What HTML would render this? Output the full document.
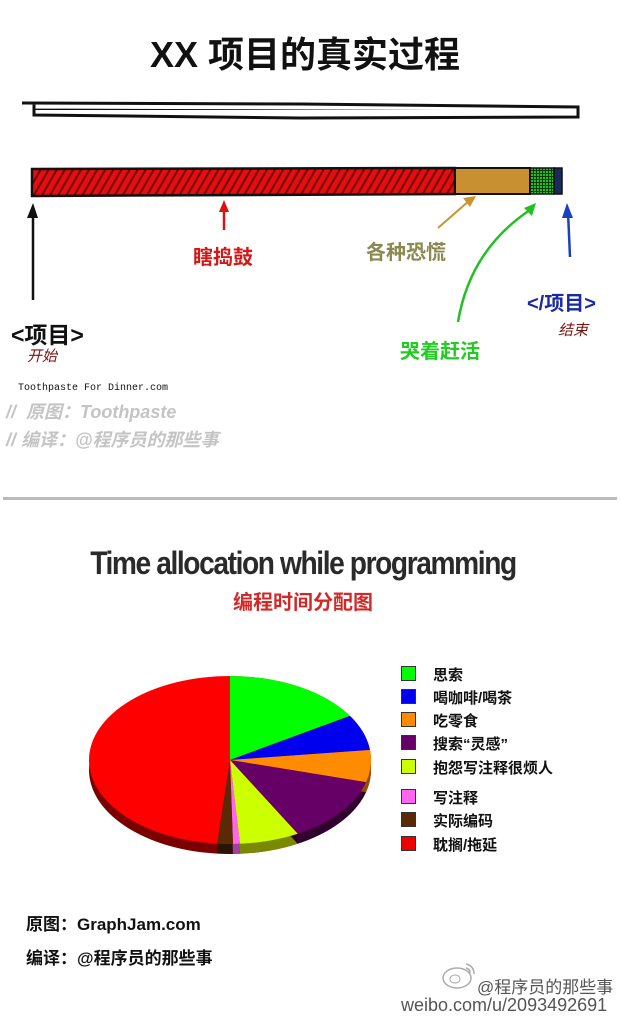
<!DOCTYPE html>
<html><head><meta charset="utf-8"><style>
*{margin:0;padding:0}
body{width:620px;height:1024px;background:#fff;position:relative;overflow:hidden;font-family:"Liberation Sans","Noto Sans CJK SC",sans-serif}
.a{position:absolute;white-space:nowrap}
.b{font-weight:bold}
.lg{position:absolute;left:401px;width:15px;height:15px;border:1px solid #333;box-sizing:border-box}
.lt{position:absolute;left:433px;font-size:15px;font-weight:bold;color:#111;white-space:nowrap}
</style></head><body>
<div class="a b" style="left:0;width:610px;text-align:center;top:26px;font-size:36px;color:#111">XX 项目的真实过程</div>
<svg class="a" style="left:0;top:0" width="620" height="500">
<path d="M22 103 L300 104 L578 107 L578 112 L34 110 L34 104" fill="none" stroke="#111" stroke-width="3"/>
<path d="M34 110 L34 115 L300 118 L578 117 L578 110" fill="#fff" stroke="#111" stroke-width="3"/>
<defs><pattern id="h" width="7" height="7" patternUnits="userSpaceOnUse" patternTransform="rotate(30)"><rect width="7" height="7" fill="#e01010"/><rect width="2" height="7" fill="#7a0000"/></pattern>
<pattern id="g" width="3" height="3" patternUnits="userSpaceOnUse"><rect width="3" height="3" fill="#0a3a0a"/><rect width="2" height="2" fill="#22c022"/></pattern></defs>
<path d="M32 169 L455 168 L455 194 L32 196 Z" fill="url(#h)" stroke="#111" stroke-width="2.5"/>
<rect x="455" y="168" width="75" height="26" fill="#c89030" stroke="#111" stroke-width="2"/>
<rect x="530" y="168" width="24" height="26" fill="url(#g)" stroke="#111" stroke-width="1.5"/>
<rect x="554" y="168" width="8" height="26" fill="#1a2a5a" stroke="#111" stroke-width="1.5"/>
<path d="M33 300 L33 210" stroke="#111" stroke-width="2.5"/><path d="M27 218 L33 203 L38 218Z" fill="#111"/>
<path d="M224 230 L224 208" stroke="#d11" stroke-width="2.5"/><path d="M219 212 L224 200 L229 212Z" fill="#d11"/>
<path d="M438 228 L470 200" stroke="#c9952e" stroke-width="2"/><path d="M463 198 L476 196 L470 207Z" fill="#c9952e"/>
<path d="M458 322 Q470 250 530 210" stroke="#22c022" stroke-width="2.5" fill="none"/><path d="M524 208 L536 203 L532 216Z" fill="#22c022"/>
<path d="M570 257 L568 212" stroke="#1840c0" stroke-width="2.5"/><path d="M562 218 L567 203 L573 218Z" fill="#1840c0"/>
</svg>
<div class="a b" style="left:193px;top:241px;font-size:20px;color:#d41818">瞎捣鼓</div>
<div class="a b" style="left:366px;top:236px;font-size:20px;color:#8a8a50">各种恐慌</div>
<div class="a b" style="left:11px;top:316px;font-size:23px;color:#111">&lt;项目&gt;</div>
<div class="a" style="left:27px;top:345px;font-size:15px;color:#7a1010;font-style:italic">开始</div>
<div class="a b" style="left:527px;top:287px;font-size:20px;color:#1a2aa0">&lt;/项目&gt;</div>
<div class="a" style="left:558px;top:319px;font-size:15px;color:#7a1010;font-style:italic">结束</div>
<div class="a b" style="left:400px;top:335px;font-size:20px;color:#22cc22">哭着赶活</div>
<div class="a" style="left:18px;top:383px;font-size:10px;font-family:'Liberation Mono',monospace;color:#111">Toothpaste For Dinner.com</div>
<div class="a b" style="left:6px;top:398px;font-size:18px;color:#c4c4c4;font-style:italic">//&nbsp; 原图：Toothpaste</div>
<div class="a b" style="left:6px;top:426px;font-size:18px;color:#c4c4c4;font-style:italic">// 编译：@程序员的那些事</div>
<div class="a" style="left:3px;top:497px;width:614px;height:3px;background:#bbb"></div>
<div class="a b" style="left:0;width:606px;text-align:center;top:545px;font-size:32px;color:#2a2a2a;letter-spacing:-1.6px;transform:scaleX(0.88)">Time allocation while programming</div>
<div class="a b" style="left:0;width:606px;text-align:center;top:586px;font-size:20px;color:#d42828">编程时间分配图</div>
<svg class="a" style="left:0;top:0" width="620" height="1024">
<defs>
<clipPath id="t"><ellipse cx="230" cy="760" rx="141" ry="84"/></clipPath>
<clipPath id="s"><ellipse cx="230" cy="770" rx="141" ry="84"/></clipPath>
</defs>
<g clip-path="url(#s)">
<rect x="80" y="670" width="300" height="200" fill="#7a0000"/>
<polygon points="230,770 204,938 236,938" fill="#2a1505"/>
<polygon points="230,770 236,938 250,938" fill="#a040a0"/>
<polygon points="230,770 250,938 364,916" fill="#7a8a00"/>
<polygon points="230,770 364,916 500,814" fill="#300030"/>
<polygon points="230,770 500,814 508,750" fill="#905000"/>
</g>
<g clip-path="url(#t)">
<rect x="80" y="670" width="300" height="200" fill="#ff0000"/>
<polygon points="230,760 230,592 464,592 464,674" fill="#00ff00"/>
<polygon points="230,760 464,674 508,740" fill="#0000ee"/>
<polygon points="230,760 508,740 500,804" fill="#ff8c00"/>
<polygon points="230,760 500,804 364,906" fill="#660066"/>
<polygon points="230,760 364,906 250,928" fill="#ccff00"/>
<polygon points="230,760 250,928 236,928" fill="#ff66ee"/>
<polygon points="230,760 236,928 204,928" fill="#5a2a05"/>
</g>
</svg>
<div class="lg" style="top:666px;background:#00ff00"></div><div class="lt" style="top:664px">思索</div>
<div class="lg" style="top:689px;background:#0000ee"></div><div class="lt" style="top:687px">喝咖啡/喝茶</div>
<div class="lg" style="top:712px;background:#ff8c00"></div><div class="lt" style="top:710px">吃零食</div>
<div class="lg" style="top:735px;background:#660066"></div><div class="lt" style="top:733px">搜索“灵感”</div>
<div class="lg" style="top:759px;background:#ccff00"></div><div class="lt" style="top:757px">抱怨写注释很烦人</div>
<div class="lg" style="top:789px;background:#ff66ee"></div><div class="lt" style="top:787px">写注释</div>
<div class="lg" style="top:812px;background:#5a2a05"></div><div class="lt" style="top:810px">实际编码</div>
<div class="lg" style="top:836px;background:#ee0000"></div><div class="lt" style="top:834px">耽搁/拖延</div>
<div class="a b" style="left:26px;top:910px;font-size:17px;color:#111">原图：GraphJam.com</div>
<div class="a b" style="left:26px;top:944px;font-size:17px;color:#111">编译：@程序员的那些事</div>
<svg class="a" style="left:440px;top:960px" width="40" height="30"><ellipse cx="17" cy="18" rx="14" ry="10" fill="none" stroke="#aaa" stroke-width="1.5"/><ellipse cx="15" cy="19" rx="5" ry="4" fill="none" stroke="#aaa"/><path d="M26 4 Q34 6 34 14 M26 8 Q30 9 30 13" fill="none" stroke="#aaa" stroke-width="1.5"/></svg>
<div class="a" style="left:477px;top:973px;font-size:17px;color:#555">@程序员的那些事</div>
<div class="a" style="left:401px;top:995px;font-size:18px;color:#555">weibo.com/u/2093492691</div>
</body></html>
